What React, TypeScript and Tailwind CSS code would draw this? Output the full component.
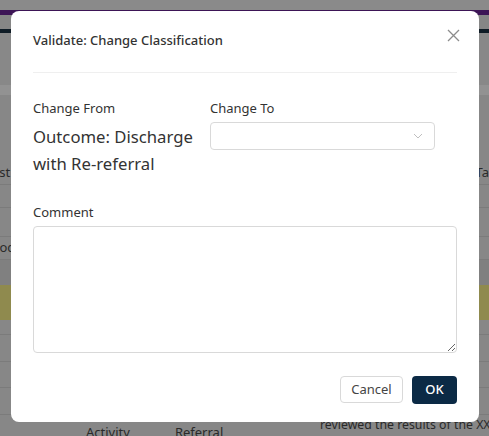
import React from "react";

function ChevronDown() {
  return (
    <svg width="12" height="12" viewBox="0 0 12 12" fill="none" stroke="#bfbfbf" strokeWidth="1">
      <path d="M2 4l4 4 4-4" />
    </svg>
  );
}

function CloseIcon() {
  return (
    <svg width="13" height="13" viewBox="0 0 13 13" fill="none" stroke="#8c8c8c" strokeWidth="1.3">
      <path d="M1 1l11 11M12 1L1 12" />
    </svg>
  );
}

// dimmed page behind the dialog
function Backdrop() {
  return (
    <div className="flex h-[436px] flex-col overflow-hidden bg-[#878787] text-[13px] text-[#2a2a2a] [&>*]:shrink-0">
      <div className="h-[10px] bg-[#8a8a8a]" />
      <div className="h-[5px] bg-[#3d1556]" />
      <div className="h-[14px] bg-[#868686]" />
      <div className="h-[4px] bg-[#0f1c26]" />
      <div className="h-[52px] bg-[#888888]" />
      <div className="h-[10px] bg-[#929292]" />
      <div className="flex h-[90px] items-end justify-between border-b border-[#7b7b7b] pb-[3px] leading-[18px]">
        <span className="-ml-[4px]">ist</span>
        <span>Ta</span>
      </div>
      <div className="h-[23px] border-b border-[#7b7b7b]" />
      <div className="h-[29px] border-b border-[#7b7b7b]" />
      <div className="flex h-[23px] items-center border-b border-[#7b7b7b]">
        <span className="-ml-[10px]">Doc</span>
      </div>
      <div className="h-[25px] bg-[#808080]" />
      <div className="h-[35px] bg-[#8f8a4e]" />
      <div className="h-[15px] border-b border-[#7b7b7b]" />
      <div className="h-[27px] border-b border-[#7b7b7b]" />
      <div className="h-[26px] border-b border-[#7b7b7b]" />
      <div className="flex h-[27px] items-center justify-end border-b border-[#7b7b7b] pr-[17px]">
        <span className="leading-[18px]">c</span>
      </div>
      <div className="flex h-[21px]">
        <div className="flex w-[320px] shrink-0 items-start pt-[10px]">
          <span className="ml-[86px] leading-[14px]">Activity</span>
          <span className="ml-[45px] leading-[14px]">Referral</span>
        </div>
        <span className="whitespace-nowrap text-[12.3px] leading-[20px]">reviewed the results of the XXX</span>
      </div>
    </div>
  );
}

export default function App() {
  return (
    <div className="relative h-[436px] w-[489px] overflow-hidden" style={{ fontFamily: '"Noto Sans", "Open Sans", sans-serif' }}>
      <Backdrop />
      <div className="absolute inset-0">
        <div className="ml-[11px] mt-[11px] flex h-[411px] w-[468px] flex-col rounded-[8px] bg-white px-[22px] pb-[18px] pt-[20px] text-[#333333]">
          <div className="flex items-start justify-between">
            <h2 className="text-[13px] font-medium leading-[18px]">Validate: Change Classification</h2>
            <button className="-mr-[3px] -mt-[2px]">
              <CloseIcon />
            </button>
          </div>
          <div className="mt-[23px] h-px bg-[#efefef]" />

          <div className="mt-[26px] flex gap-[12px]">
            <div className="w-[165px]">
              <div className="text-[13px] leading-[18px]">Change From</div>
              <div className="mt-[6px] text-[16.7px] leading-[27px]">Outcome: Discharge with Re-referral</div>
            </div>
            <div className="w-[225px]">
              <div className="text-[13px] leading-[18px]">Change To</div>
              <div className="mt-[5px] flex h-[28px] items-center justify-end rounded-[4px] border border-[#d9d9d9] pr-[10px]">
                <ChevronDown />
              </div>
            </div>
          </div>

          <div className="mt-[26px] text-[13px] leading-[18px]">Comment</div>
          <textarea className="mt-[5px] h-[128px] w-full resize-y rounded-[4px] border border-[#d9d9d9] outline-none" />

          <div className="mt-[23px] flex justify-end gap-[9px]">
            <button className="h-[27px] w-[63px] rounded-[4px] border border-[#d9d9d9] text-[13px] text-[#444444]">Cancel</button>
            <button className="h-[28px] w-[45px] rounded-[4px] bg-[#0b2a45] text-[13px] font-medium text-white">OK</button>
          </div>
        </div>
      </div>
    </div>
  );
}
